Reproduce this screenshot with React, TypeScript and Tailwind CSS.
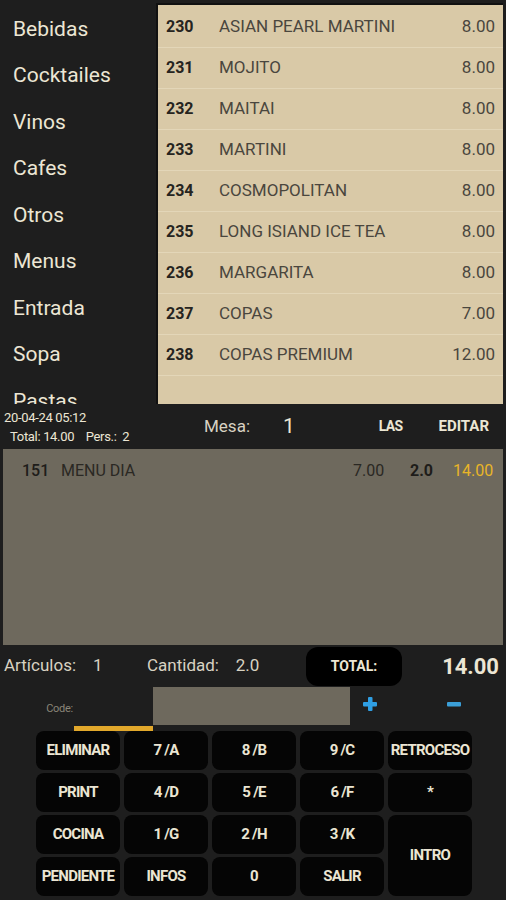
import React from 'react'

const categories = ['Bebidas', 'Cocktailes', 'Vinos', 'Cafes', 'Otros', 'Menus', 'Entrada', 'Sopa', 'Pastas']

const products = [
  { code: '230', name: 'ASIAN PEARL MARTINI', price: '8.00' },
  { code: '231', name: 'MOJITO', price: '8.00' },
  { code: '232', name: 'MAITAI', price: '8.00' },
  { code: '233', name: 'MARTINI', price: '8.00' },
  { code: '234', name: 'COSMOPOLITAN', price: '8.00' },
  { code: '235', name: 'LONG ISIAND ICE TEA', price: '8.00' },
  { code: '236', name: 'MARGARITA', price: '8.00' },
  { code: '237', name: 'COPAS', price: '7.00' },
  { code: '238', name: 'COPAS PREMIUM', price: '12.00' },
]

const keys = [
  'ELIMINAR', '7 /A', '8 /B', '9 /C', 'RETROCESO',
  'PRINT', '4 /D', '5 /E', '6 /F', '*',
  'COCINA', '1 /G', '2 /H', '3 /K',
  'PENDIENTE', 'INFOS', '0', 'SALIR',
]

function Key({ label }: { label: string }) {
  return (
    <button className="h-[39px] rounded-lg bg-[#050505] text-[15px] font-bold tracking-tighter text-[#ebe5d3] whitespace-nowrap overflow-hidden">
      {label}
    </button>
  )
}

export default function App() {
  return (
    <div className="w-[506px] h-[900px] overflow-hidden bg-[#1e1e1e] font-['Roboto',sans-serif] text-[#ece6d4]">
      {/* carta */}
      <div className="flex h-[404px]">
        <div className="w-[156px] shrink-0 overflow-hidden pt-[6px] pl-[13px]">
          {categories.map(c => (
            <div key={c} className="h-[46.5px] flex items-center text-[21px]">{c}</div>
          ))}
        </div>
        <div className="mt-[3px] mr-[3px] flex-1 border-t-2 border-l-2 border-[#111] bg-[#d9c9a7] pt-[2px]">
          {products.map(p => (
            <div key={p.code} className="h-[41px] flex items-center border-b border-[#e3d6b8] pl-[8px] pr-[8px]">
              <div className="w-[53px] text-[16px] font-bold text-[#262420]">{p.code}</div>
              <div className="flex-1 text-[17px] text-[#4a463e]">{p.name}</div>
              <div className="text-[17px] text-[#4a463e]">{p.price}</div>
            </div>
          ))}
        </div>
      </div>

      {/* cabecera pedido */}
      <div className="h-[45px] flex items-center">
        <div className="w-[190px] pl-[4px] text-[13px] leading-[19px] tracking-tight">
          <div>20-04-24 05:12</div>
          <div className="pl-[6px]">Total: 14.00&nbsp;&nbsp;&nbsp; Pers.:&nbsp; 2</div>
        </div>
        <div className="ml-[14px] text-[17px] text-[#d8d2c2]">Mesa:</div>
        <div className="ml-[33px] text-[21px]">1</div>
        <div className="ml-[84px] text-[14px] font-bold tracking-tighter">LAS</div>
        <div className="ml-[36px] text-[15px] font-bold">EDITAR</div>
      </div>

      {/* lineas */}
      <div className="mx-[3px] h-[196px] bg-[#6e695d] pt-[10px]">
        <div className="flex items-center text-[16px]">
          <div className="w-[58px] pl-[19px] font-medium text-[#1e1d1a]">151</div>
          <div className="flex-1 text-[#2a2823]">MENU DIA</div>
          <div className="w-[57px] text-[#2a2823]">7.00</div>
          <div className="w-[43px] font-bold text-[#1e1d1a]">2.0</div>
          <div className="w-[50px] text-[#e8b528]">14.00</div>
        </div>
      </div>

      {/* totales */}
      <div className="h-[42px] flex items-center">
        <div className="pl-[4px] w-[147px] text-[17px] text-[#d8d2c2]">Artículos:&nbsp;&nbsp;&nbsp; 1</div>
        <div className="w-[159px] text-[17px] text-[#d8d2c2]">Cantidad:&nbsp;&nbsp;&nbsp; 2.0</div>
        <div className="w-[96px] h-[39px] rounded-xl bg-black flex items-center justify-center text-[14px] font-bold">TOTAL:</div>
        <div className="flex-1 pr-[7px] text-right text-[22px] font-bold">14.00</div>
      </div>

      {/* codigo */}
      <div className="h-[44px] flex items-stretch">
        <div className="w-[74px] flex items-center justify-end pr-[1px] text-[11px] tracking-tight text-[#8a8578]">
          Code:
        </div>
        <div className="w-[79px] flex items-end">
          <div className="h-[5px] w-full bg-[#e2a82b]" />
        </div>
        <div className="w-[197px] h-[38px] bg-[#6e695d]" />
        <div className="flex-1 flex items-start pt-[9px]">
          <svg width="16" height="16" viewBox="0 0 16 16" className="ml-[12px]">
            <rect x="6" y="1" width="4.5" height="14" rx="1" fill="#2f9fe4" />
            <rect x="1" y="6" width="14" height="4.5" rx="1" fill="#2f9fe4" />
          </svg>
          <svg width="16" height="16" viewBox="0 0 16 16" className="ml-[68px]">
            <rect x="1" y="6" width="14" height="4.5" rx="1" fill="#3b9fd8" />
          </svg>
        </div>
      </div>

      {/* teclado */}
      <div className="ml-[36px] w-[436px] grid grid-cols-5 gap-x-[4px] gap-y-[3px]">
        {keys.slice(0, 14).map(k => <Key key={k} label={k} />)}
        <button className="row-span-2 rounded-lg bg-[#050505] text-[15px] font-bold tracking-tighter text-[#ebe5d3]">
          INTRO
        </button>
        {keys.slice(14).map(k => <Key key={k} label={k} />)}
      </div>
    </div>
  )
}
